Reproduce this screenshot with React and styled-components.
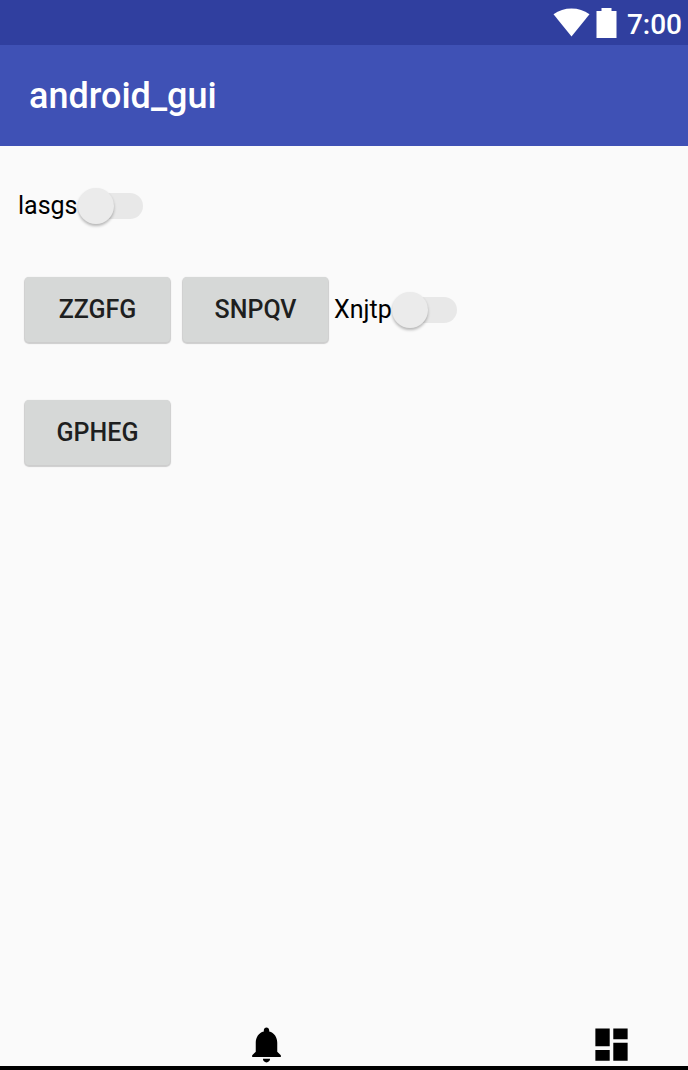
import React from "react";
import styled, { createGlobalStyle } from "styled-components";

const GlobalStyle = createGlobalStyle`
  * { box-sizing: border-box; }
  body {
    margin: 0;
    background: #fafafa;
    font-family: Roboto, "Liberation Sans", sans-serif;
  }
`;

const Screen = styled.div`
  display: flex;
  flex-direction: column;
  min-height: 100vh;
  background: #fafafa;
`;

const StatusBar = styled.div`
  display: flex;
  align-items: center;
  justify-content: flex-end;
  height: 45px;
  padding: 0 6px;
  background: #303f9f;
  color: #fff;
`;

const StatusIcon = styled.svg`
  display: block;
  margin-right: ${(p) => p.$gap}px;
  fill: #fff;
`;

const Clock = styled.time`
  font-size: 28px;
  font-weight: 500;
  line-height: 32px;
  padding-top: 4px;
`;

const AppBar = styled.header`
  display: flex;
  align-items: center;
  height: 101px;
  padding: 0 29px;
  background: #3f51b5;
`;

const Title = styled.h1`
  margin: 0;
  color: #fff;
  font-size: 36px;
  font-weight: 500;
  line-height: 44px;
`;

const Content = styled.main`
  flex: 1;
  display: flex;
  flex-direction: column;
  align-items: flex-start;
  padding: 38px 18px;
`;

const Row = styled.div`
  display: flex;
  align-items: center;
  margin-bottom: ${(p) => p.$space || 0}px;
`;

const RaisedButton = styled.button`
  width: 145px;
  height: 65px;
  margin: 0 6px 0 7px;
  padding: 0;
  border: 0;
  border-radius: 4px;
  background: #d6d8d7;
  box-shadow: 0 1px 1px 1px rgba(0, 0, 0, 0.18);
  color: #1e1f1f;
  font: 500 25px/30px Roboto, "Liberation Sans", sans-serif;
  text-transform: uppercase;
  cursor: pointer;
`;

const SwitchLabel = styled.label`
  display: flex;
  align-items: center;
  color: #000;
  font-size: 25px;
  line-height: 44px;
  cursor: pointer;
`;

const SwitchInput = styled.input`
  appearance: none;
  display: flex;
  align-items: center;
  width: 65px;
  height: 26px;
  margin: 0;
  border-radius: 13px;
  background: linear-gradient(to right, transparent 16px, #e8e8e8 16px);
  cursor: pointer;

  &::before {
    content: "";
    width: 36px;
    height: 36px;
    flex: none;
    border-radius: 50%;
    background: #ebebeb;
    box-shadow: 0 2px 3px rgba(0, 0, 0, 0.28);
  }

  &:checked { justify-content: flex-end; }
`;

const BottomNav = styled.nav`
  display: flex;
  justify-content: space-between;
  padding: 0 55px 0 245px;
  border-bottom: 4px solid #000;
`;

const NavButton = styled.button`
  display: block;
  height: 43px;
  padding: 0;
  border: 0;
  background: none;
  cursor: pointer;
`;

const NavIcon = styled.svg`
  display: block;
  width: 43px;
  height: 43px;
  fill: #000;
`;

function Switch({ label }) {
  return (
    <SwitchLabel>
      {label}
      <SwitchInput type="checkbox" role="switch" />
    </SwitchLabel>
  );
}

export default function App() {
  return (
    <Screen>
      <GlobalStyle />
      <StatusBar>
        <StatusIcon $gap={6} width="37" height="30" viewBox="0 0 37 30" aria-hidden="true">
          <path d="M18.5 28.5 L0.5 6.3 Q8.5 0.5 18.5 0.5 T36.500 6.3 Z" />
        </StatusIcon>
        <StatusIcon $gap={10} width="21" height="30" viewBox="0 0 21 30" aria-hidden="true">
          <path d="M5.500 0 H15.500 V3 H20.500 V30 H0.500 V3 H5.500 Z" />
        </StatusIcon>
        <Clock>7:00</Clock>
      </StatusBar>
      <AppBar>
        <Title>android_gui</Title>
      </AppBar>
      <Content>
        <Row $space={49}>
          <Switch label="lasgs" />
        </Row>
        <Row $space={58}>
          <RaisedButton type="button">ZZGFG</RaisedButton>
          <RaisedButton type="button">SNPQV</RaisedButton>
          <Switch label="Xnjtp" />
        </Row>
        <Row>
          <RaisedButton type="button">GPHEG</RaisedButton>
        </Row>
      </Content>
      <BottomNav>
        <NavButton type="button" aria-label="Notifications">
          <NavIcon viewBox="0 0 24 24">
            <path d="M12 22c1.100 0 2-.9 2-2h-4c0 1.100.89 2 2 2zm6-6v-5c0-3.070-1.640-5.640-4.500-6.320V4c0-.83-.67-1.500-1.500-1.500s-1.500.67-1.500 1.500v.68C7.630 5.360 6 7.920 6 11v5l-2 2v1h16v-1l-2-2z" />
          </NavIcon>
        </NavButton>
        <NavButton type="button" aria-label="Dashboard">
          <NavIcon viewBox="0 0 24 24">
            <path d="M3 13h8V3H3v10zm0 8h8v-6H3v6zm10 0h8V11h-8v10zm0-18v6h8V3h-8z" />
          </NavIcon>
        </NavButton>
      </BottomNav>
    </Screen>
  );
}
